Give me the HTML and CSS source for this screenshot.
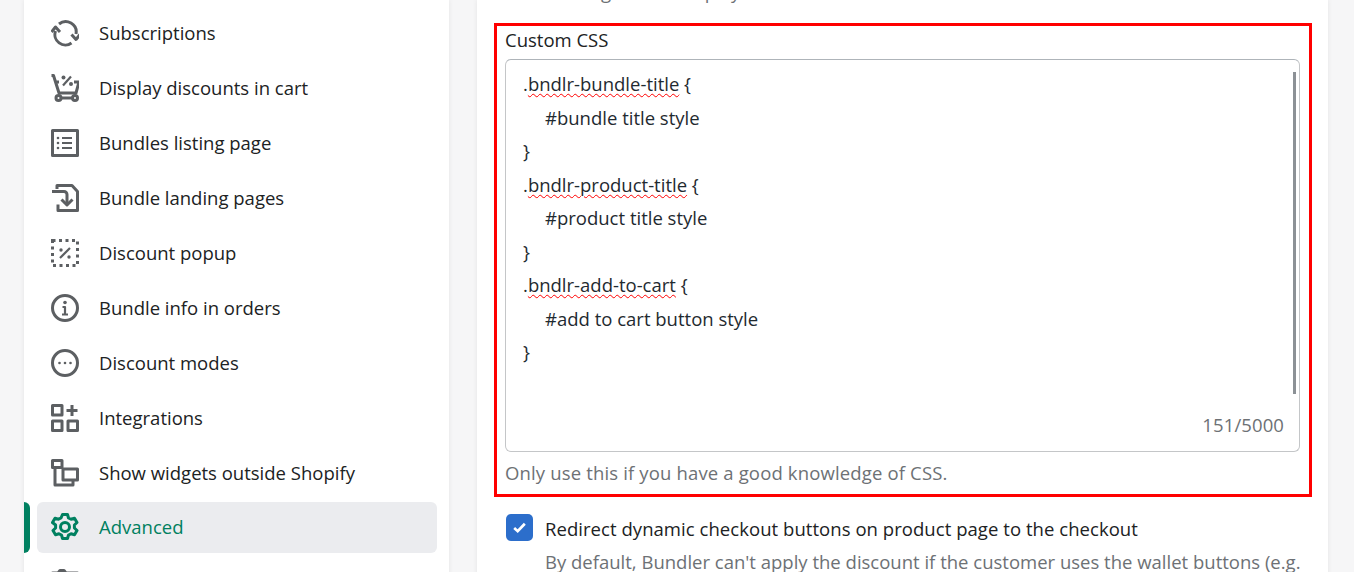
FILE: index.html
```html
<!DOCTYPE html>
<html lang="en">
<head>
<meta charset="utf-8">
<title>Advanced settings</title>
<link rel="stylesheet" href="styles.css">
</head>
<body>
<div class="page">
  <nav class="side">
    <a class="item"><svg viewBox="0 0 28 28"><path class="s" d="M8 5a10.500 10.500 0 0 1 17 10M4.500 12a10.500 10.500 0 0 0 16 12"/><path class="s" d="M20.500 15.500l4.500 5 4-5M.5 13l4-5 4.500 5"/></svg><span>Subscriptions</span></a>
    <a class="item"><svg viewBox="0 0 28 28"><path class="s" d="M.5 1.500h2L8 19h17l3-11h-5M4 8h4"/><circle class="s" cx="7.500" cy="24" r="2.500"/><circle class="s" cx="24" cy="24" r="2.500"/><path class="s" d="M10 24h11.500"/><path class="s thin" d="M12 11.500l8-9"/><circle class="f" cx="12.500" cy="3.500" r="2"/><circle class="f" cx="20" cy="10" r="2"/></svg><span>Display discounts in cart</span></a>
    <a class="item"><svg viewBox="0 0 28 28"><rect class="s" x="1.500" y="1.500" width="25" height="25"/><path class="s thin" d="M11 9h10M11 14h10M11 19h10"/><circle class="f" cx="7" cy="9" r="1.300"/><circle class="f" cx="7" cy="14" r="1.300"/><circle class="f" cx="7" cy="19" r="1.300"/></svg><span>Bundles listing page</span></a>
    <a class="item"><svg viewBox="0 0 28 28"><path class="s" d="M6 5V1.500h15l5.500 6v19H7v-6M1 7.500h12a3 3 0 0 1 3 3V20"/><path class="s" d="M10.500 15.500l5.500 5.500 5.500-5.500"/></svg><span>Bundle landing pages</span></a>
    <a class="item"><svg viewBox="0 0 28 28"><rect class="d" x="1.500" y="1.500" width="25" height="25"/><path class="s thin" d="M9 19l10-10"/><circle class="f" cx="10" cy="11" r="1.700"/><circle class="f" cx="18" cy="18" r="1.700"/></svg><span>Discount popup</span></a>
    <a class="item"><svg viewBox="0 0 28 28"><circle class="s" cx="14" cy="14" r="12.500"/><circle class="f" cx="14" cy="8.500" r="1.800"/><path class="s thin" d="M11.500 13H14v7M11 20.500h6"/></svg><span>Bundle info in orders</span></a>
    <a class="item"><svg viewBox="0 0 28 28"><circle class="s" cx="14" cy="14" r="12.500"/><circle class="f" cx="8.500" cy="14" r="1.300"/><circle class="f" cx="14" cy="14" r="1.300"/><circle class="f" cx="19.500" cy="14" r="1.300"/></svg><span>Discount modes</span></a>
    <a class="item"><svg viewBox="0 0 28 28"><rect class="s" x="1.500" y="1.500" width="9.500" height="9.500"/><rect class="s" x="1.500" y="17" width="9.500" height="9.500"/><rect class="s" x="17" y="17" width="9.500" height="9.500"/><path class="s" d="M21 1v11M15.500 6.500h11"/></svg><span>Integrations</span></a>
    <a class="item"><svg viewBox="0 0 28 28"><path class="s" d="M1.500 1.500h9.500v7H1.500zM4 9v17h18v-5"/><rect class="s" x="12" y="10" width="14.500" height="11"/></svg><span>Show widgets outside Shopify</span></a>
    <a class="item active"><svg viewBox="0 0 28 28"><path class="s" d="M11.500 1.500h5l1 3.500 2.500 1.200 3.500-1 2.500 4.300-2.600 2.500v3l2.600 2.500-2.500 4.300-3.500-1-2.500 1.200-1 3.500h-5l-1-3.500-2.500-1.200-3.500 1-2.500-4.300 2.600-2.500v-3L1.500 9.500 4 5.200l3.500 1L10 5z"/><circle class="s" cx="14" cy="14" r="4.500"/></svg><span>Advanced</span></a>
    <a class="item"><svg viewBox="0 0 28 28"><path class="s" d="M1.500 4H7l2-2.500h4l2 2.500h11.500v22H1.500z"/></svg><span>Translations</span></a>
  </nav>
  <main class="main">
    <p class="clip">Customizing how to display</p>
    <section class="marked">
      <label class="label">Custom CSS</label>
      <div class="area">
        <div class="code">
          <div>.<u>bndlr-bundle-title</u> {</div>
          <div class="in">#bundle title style</div>
          <div>}</div>
          <div>.<u>bndlr-product-title</u> {</div>
          <div class="in">#product title style</div>
          <div>}</div>
          <div>.<u>bndlr-add-to-cart</u> {</div>
          <div class="in">#add to cart button style</div>
          <div>}</div>
        </div>
        <div class="bar"></div>
        <div class="count">151/5000</div>
      </div>
      <p class="help">Only use this if you have a good knowledge of CSS.</p>
    </section>
    <div class="check">
      <span class="box"><svg viewBox="0 0 16 16"><path d="M3 8.500l3.300 3L13 4.500"/></svg></span>
      <div class="ctext">
        <div class="ctitle">Redirect dynamic checkout buttons on product page to the checkout</div>
        <div class="cdesc">By default, Bundler can't apply the discount if the customer uses the wallet buttons (e.g.</div>
      </div>
    </div>
  </main>
</div>
</body>
</html>
```
FILE: styles.css
```css
* { box-sizing: border-box; }
html, body { margin: 0; height: 572px; overflow: hidden; background: #f6f6f7; }
body { font-family: "Open Sans", "Noto Sans", sans-serif; font-size: 18.500px; color: #202223; }
.page { display: flex; height: 572px; overflow: hidden; padding-left: 24px; }
.side { width: 425px; height: 640px; flex: none; background: #fff; padding: 5px 12px 0 13px; margin-right: 28px; box-shadow: 0 0 5px rgba(23,24,24,.08); }
.item { display: flex; align-items: center; height: 55px; padding-left: 14px; gap: 20px; position: relative; border-radius: 6px; }
.item svg { width: 28px; height: 28px; flex: none; }
.s { fill: none; stroke: #5c5f62; stroke-width: 3; stroke-linejoin: round; }
.thin { stroke-width: 2.200; }
.f { fill: #5c5f62; }
.d { fill: none; stroke: #5c5f62; stroke-width: 3; stroke-dasharray: 3 3.500; }
.active { height: 51px; margin-top: 2px; margin-bottom: 2px; padding-bottom: 2px; background: #ebecef; color: #008060; }
.active::before { content: ""; position: absolute; left: -13px; top: 0; width: 6px; height: 100%; background: #008060; border-radius: 0 6px 6px 0; }
.active .s { stroke: #008060; }
.main { width: 851px; flex: none; background: #fff; padding: 0 16px 0 17px; height: 640px; box-shadow: 0 0 5px rgba(23,24,24,.08); }
.clip { margin: -21px 0 0 11px; height: 44px; line-height: 26px; color: #6d7175; }
.marked { border: 3px solid #f00; height: 474px; padding: 0 9px 0 8px; }
.label { display: block; height: 33px; line-height: 28px; }
.area { position: relative; height: 393px; border: 1px solid #c4c6c8; border-top-color: #aeb4b9; border-radius: 6px; padding: 7px 17px; color: #1f2a30; }
.code { line-height: 33.500px; }
u { text-decoration: underline wavy #f00 1.100px; text-underline-offset: 2px; }
.in { padding-left: 22px; }
.bar { position: absolute; right: 3px; top: 12px; width: 3px; height: 322px; background: #8c9196; }
.count { position: absolute; right: 15px; bottom: 13px; color: #6d7175; line-height: 26px; letter-spacing: .1px; }
.help { margin: 7px 0 0; line-height: 28px; color: #6d7175; letter-spacing: .15px; }
.check { display: flex; gap: 12px; padding: 17px 0 0 12px; }
.box { width: 27px; height: 27px; flex: none; background: #2c6ecb; border-radius: 5px; display: flex; align-items: center; justify-content: center; }
.box svg { width: 17px; height: 17px; fill: none; stroke: #fff; stroke-width: 2.500; }
.ctext { padding-top: 2px; }
.ctitle { line-height: 26px; letter-spacing: .05px; }
.cdesc { line-height: 26px; margin-top: 7px; color: #6d7175; }
```
